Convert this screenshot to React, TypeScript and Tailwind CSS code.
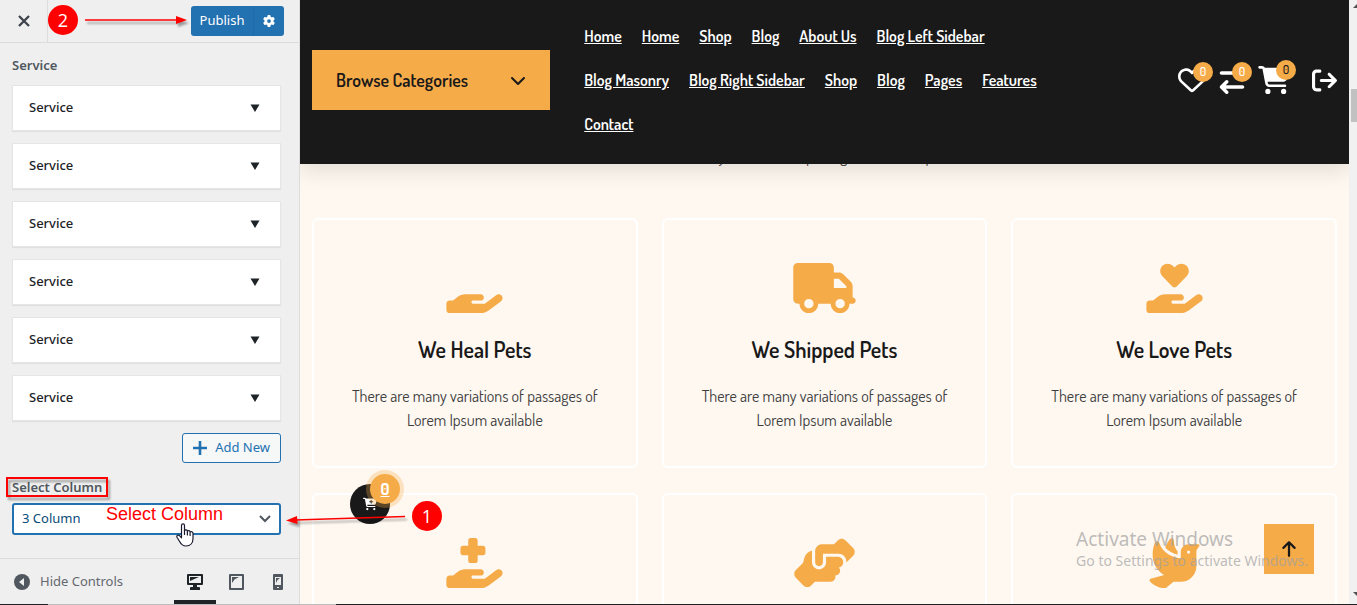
import type { ReactNode } from 'react'
import type { IconType } from 'react-icons'
import {
  FaArrowRightArrowLeft,
  FaArrowRightFromBracket,
  FaArrowUp,
  FaCartPlus,
  FaCartShopping,
  FaChevronDown,
  FaDove,
  FaGear,
  FaHandHolding,
  FaHandHoldingHeart,
  FaHandHoldingMedical,
  FaHandshakeAngle,
  FaRegHeart,
  FaTruck,
} from 'react-icons/fa6'

const navLinks = [
  'Home',
  'Home',
  'Shop',
  'Blog',
  'About Us',
  'Blog Left Sidebar',
  'Blog Masonry',
  'Blog Right Sidebar',
  'Shop',
  'Blog',
  'Pages',
  'Features',
  'Contact',
]

interface Service {
  icon: IconType
  title?: string
  text?: string
}

const blurb = 'There are many variations of passages of Lorem Ipsum available'

const services: Service[] = [
  { icon: FaHandHolding, title: 'We Heal Pets', text: blurb },
  { icon: FaTruck, title: 'We Shipped Pets', text: blurb },
  { icon: FaHandHoldingHeart, title: 'We Love Pets', text: blurb },
  { icon: FaHandHoldingMedical },
  { icon: FaHandshakeAngle },
  { icon: FaDove },
]

function DesktopIcon() {
  return (
    <svg viewBox="0 0 16 16" className="size-4" fill="currentColor" aria-hidden="true">
      <path
        fillRule="evenodd"
        d="M1 0h14a1 1 0 0 1 1 1v9a1 1 0 0 1-1 1h-5v2h2a1 1 0 0 1 1 1v2H3v-2a1 1 0 0 1 1-1h2v-2H1a1 1 0 0 1-1-1V1a1 1 0 0 1 1-1zm1 2v7h12V2z"
      />
      <path d="M3 3h9L8.500 4.500 3 7z" />
    </svg>
  )
}

function TabletIcon() {
  return (
    <svg viewBox="0 0 15 16" className="h-4 w-[15px]" fill="currentColor" aria-hidden="true">
      <path
        fillRule="evenodd"
        d="M1 0h13a1 1 0 0 1 1 1v14a1 1 0 0 1-1 1H1a1 1 0 0 1-1-1V1a1 1 0 0 1 1-1zm1 2v12h11V2z"
      />
      <path d="M3 3h7L5.500 5.500 3 9z" />
    </svg>
  )
}

function PhoneIcon() {
  return (
    <svg viewBox="0 0 10 16" className="h-4 w-2.5" fill="currentColor" aria-hidden="true">
      <path
        fillRule="evenodd"
        d="M1 0h8a1 1 0 0 1 1 1v14a1 1 0 0 1-1 1H1a1 1 0 0 1-1-1V1a1 1 0 0 1 1-1zm1 3v8h6V3zm2 10v1h2v-1z"
      />
      <path d="M3 4h4L4.500 6 3 9z" />
    </svg>
  )
}

function SidebarHeader() {
  return (
    <div className="flex h-[43px] items-center justify-between border-b border-[#dcdcde] pr-[15px]">
      <button
        type="button"
        aria-label="Close customizer"
        className="flex h-full w-12 items-center justify-center border-r border-[#dcdcde] text-[#3c434a]"
      >
        <svg viewBox="0 0 12 12" className="size-3" stroke="currentColor" strokeWidth="2.300" aria-hidden="true">
          <path d="M1 1l10 10M11 1L1 11" />
        </svg>
      </button>
      <div className="flex h-[30px] overflow-hidden rounded-[3px] bg-[#2271b1] text-[13px] text-white">
        <button type="button" className="w-[63px] border-r border-[#1f6aa7]">
          Publish
        </button>
        <button type="button" aria-label="Publish settings" className="flex w-[30px] items-center justify-center">
          <FaGear className="size-3" />
        </button>
      </div>
    </div>
  )
}

function ServiceItem() {
  return (
    <button
      type="button"
      className="flex h-[46px] items-center justify-between border border-[#e5e5e5] bg-white px-4 text-[13px] font-medium text-[#1d2327] shadow-[0_1px_1px_rgba(0,0,0,0.06)]"
    >
      Service
      <svg viewBox="0 0 10 8" className="mr-1 h-2 w-2.5" fill="currentColor" aria-hidden="true">
        <path d="M.5.500h9L5 8z" />
      </svg>
    </button>
  )
}

function SidebarFooter() {
  return (
    <div className="flex h-[46px] items-stretch border-t border-[#dcdcde] text-[#50575e]">
      <button type="button" className="flex items-center gap-2.5 pl-3.5 text-[13px] text-[#646970]">
        <svg viewBox="0 0 16 16" className="size-4" aria-hidden="true">
          <circle cx="8" cy="8" r="8" fill="#50575e" />
          <path d="M10 4v8L5 8z" fill="#eee" />
        </svg>
        Hide Controls
      </button>
      <div className="ml-auto flex">
        <button
          type="button"
          aria-label="Desktop preview"
          className="flex w-[42px] items-center justify-center border-b-4 border-[#1d2327] pt-1 text-[#1d2327]"
        >
          <DesktopIcon />
        </button>
        <button type="button" aria-label="Tablet preview" className="flex w-[41px] items-center justify-center">
          <TabletIcon />
        </button>
        <button type="button" aria-label="Mobile preview" className="flex w-[42px] items-center justify-center">
          <PhoneIcon />
        </button>
      </div>
    </div>
  )
}

function Sidebar() {
  return (
    <aside className="flex w-[300px] shrink-0 flex-col border-r border-[#dcdcde] bg-[#efefef] font-['Noto_Sans',sans-serif]">
      <SidebarHeader />
      <div className="min-h-0 flex-1 overflow-hidden pt-3 pr-[18px] pl-3">
        <h3 className="mb-2.5 text-[13px] leading-5 font-semibold text-[#50575e]">Service</h3>
        <div className="flex flex-col gap-3">
          {Array.from({ length: 6 }).map((_, i) => (
            <ServiceItem key={i} />
          ))}
        </div>
        <div className="mt-3 flex justify-end">
          <button
            type="button"
            className="flex h-[30px] items-center gap-2 rounded-[3px] border border-[#2271b1] bg-[#f6f7f7] px-2.5 text-[13px] text-[#2271b1]"
          >
            <svg viewBox="0 0 14 14" className="size-3.5" stroke="currentColor" strokeWidth="2.600" aria-hidden="true">
              <path d="M7 0v14M0 7h14" />
            </svg>
            Add New
          </button>
        </div>
        <label htmlFor="columns" className="mt-3.5 mb-1.5 block text-[13px] leading-5 font-semibold text-[#50575e]">
          Select Column
        </label>
        <div className="relative">
          <select
            id="columns"
            defaultValue="3"
            className="h-8 w-full appearance-none rounded-[3px] border-2 border-[#2271b1] bg-white px-2 text-[13px] text-[#0a4b78]"
          >
            <option value="2">2 Column</option>
            <option value="3">3 Column</option>
            <option value="4">4 Column</option>
          </select>
          <svg
            viewBox="0 0 12 8"
            className="pointer-events-none absolute top-3 right-2.5 h-2 w-3"
            fill="none"
            stroke="#50575e"
            strokeWidth="2"
            aria-hidden="true"
          >
            <path d="M1 1l5 5 5-5" />
          </svg>
        </div>
      </div>
      <SidebarFooter />
    </aside>
  )
}

interface CounterIconProps {
  label: string
  children: ReactNode
  badgeClass: string
}

function CounterIcon({ label, children, badgeClass }: CounterIconProps) {
  return (
    <a href="#" aria-label={label} className="relative flex items-center">
      {children}
      <span
        className={`absolute flex size-5 items-center justify-center rounded-full bg-[#f6ab49] text-xs font-medium ${badgeClass}`}
      >
        0
      </span>
    </a>
  )
}

function SiteHeader() {
  return (
    <header className="relative z-10 grid shrink-0 grid-cols-12 items-center bg-[#191919] pt-3.5 pb-[18px] shadow-[0_8px_20px_rgba(0,0,0,0.1)]">
      <div className="col-span-3 px-3">
        <button
          type="button"
          className="flex h-[60px] w-full items-center justify-between bg-[#f6ab49] px-6 text-lg font-semibold text-[#191919]"
        >
          Browse Categories
          <FaChevronDown className="size-4" />
        </button>
      </div>
      <nav className="col-span-6 flex flex-wrap px-3">
        {navLinks.map((link, i) => (
          <a
            key={i}
            href="#"
            className="mx-2.5 text-base leading-[44px] font-semibold whitespace-nowrap text-white underline"
          >
            {link}
          </a>
        ))}
      </nav>
      <div className="col-span-3 flex items-center justify-end gap-3 pr-3 text-white">
        <CounterIcon label="Wishlist" badgeClass="-top-1 left-[15px]">
          <FaRegHeart className="size-7" />
        </CounterIcon>
        <CounterIcon label="Compare" badgeClass="-top-1 left-3.5">
          <FaArrowRightArrowLeft className="size-7" />
        </CounterIcon>
        <CounterIcon label="Cart" badgeClass="-top-1.5 left-[18px] text-[#191919]">
          <FaCartShopping className="h-7 w-8" />
        </CounterIcon>
        <a href="#" aria-label="Log out" className="ml-2.5">
          <FaArrowRightFromBracket className="size-[25px]" />
        </a>
      </div>
    </header>
  )
}

function ServiceCard({ icon: Icon, title, text }: Service) {
  return (
    <article className="flex flex-col items-center rounded-md border-2 border-white px-8 pt-[43px] pb-[34px] text-center">
      <Icon className="h-[50px] w-[63px] text-[#f6ab49]" />
      {title && <h4 className="mt-[22px] text-[22px] leading-7 font-semibold text-[#191919]">{title}</h4>}
      {text && <p className="mt-[21px] text-base text-[#3d3d3d]">{text}</p>}
    </article>
  )
}

function Preview() {
  return (
    <main className="flex min-w-0 flex-1 flex-col overflow-hidden bg-[#fef8f1] font-[Dosis,'Liberation_Sans_Narrow',sans-serif]">
      <SiteHeader />
      <section className="px-3">
        <p className="-mt-5 mb-[50px] text-center text-base text-[#3d3d3d]">{blurb}.</p>
        <div className="grid auto-rows-fr grid-cols-3 gap-x-6 gap-y-[25px]">
          {services.map((service, i) => (
            <ServiceCard key={i} {...service} />
          ))}
        </div>
      </section>
    </main>
  )
}

function Scrollbar() {
  return (
    <div className="relative w-2 shrink-0 overflow-hidden bg-[#f1f1f1]">
      <div className="absolute top-[89px] left-0.5 h-[33px] w-3 bg-[#c1c1c1]" />
      <svg viewBox="0 0 8 4" className="absolute top-1 left-1 h-1 w-2" fill="#505050" aria-hidden="true">
        <path d="M0 4h8L4 0z" />
      </svg>
      <svg viewBox="0 0 8 4" className="absolute bottom-2 left-1 h-1 w-2" fill="#505050" aria-hidden="true">
        <path d="M0 0h8L4 4z" />
      </svg>
    </div>
  )
}

function FloatingActions() {
  return (
    <>
      <a
        href="#"
        aria-label="Open cart"
        className="absolute top-[484px] left-[350px] z-20 flex size-10 items-center justify-center rounded-full bg-[#191919] font-[Dosis,'Liberation_Sans_Narrow',sans-serif] text-white"
      >
        <FaCartPlus className="size-3.5" />
        <span className="absolute -top-2.5 left-5 flex size-[30px] items-center justify-center rounded-full bg-[#f6ab49] text-base font-bold underline ring-4 ring-[#f6ab49]/30">
          0
        </span>
      </a>
      <button
        type="button"
        aria-label="Back to top"
        className="absolute right-[43px] bottom-[31px] z-20 flex size-[50px] items-center justify-center bg-[#f6ab49] text-[#191919]"
      >
        <FaArrowUp className="size-[18px]" />
      </button>
    </>
  )
}

function Watermark() {
  return (
    <div className="pointer-events-none absolute right-[49px] bottom-[34px] z-30 font-['Noto_Sans',sans-serif] text-[#a0a0a0]/70">
      <p className="text-[19px] leading-6">Activate Windows</p>
      <p className="text-sm leading-5">Go to Settings to activate Windows.</p>
    </div>
  )
}

function StepBadge({ className, children }: { className: string; children: ReactNode }) {
  return (
    <span
      className={`absolute flex size-[30px] items-center justify-center rounded-full bg-[#ff0000] font-['Open_Sans',sans-serif] text-lg text-white ${className}`}
    >
      {children}
    </span>
  )
}

function Annotations() {
  return (
    <div className="pointer-events-none absolute inset-0 z-40">
      <StepBadge className="top-[5px] left-12">2</StepBadge>
      <svg
        viewBox="0 0 106 12"
        className="absolute top-3.5 left-[83px] h-3 w-[106px] overflow-visible drop-shadow-[2px_3px_1px_rgba(0,0,0,0.35)]"
        aria-hidden="true"
      >
        <path d="M2 6h92" stroke="#f00" strokeWidth="1.300" />
        <path d="M93 2l11 4-11 4z" fill="#f00" />
      </svg>
      <StepBadge className="top-[501px] left-[412px]">1</StepBadge>
      <svg
        viewBox="0 0 122 12"
        className="absolute top-[513px] left-[285px] h-3 w-[122px] overflow-visible drop-shadow-[2px_3px_1px_rgba(0,0,0,0.35)]"
        aria-hidden="true"
      >
        <path d="M10 7L120 3.500" stroke="#f00" strokeWidth="1.300" />
        <path d="M12 3l-11 4.500 11.500 3.500z" fill="#f00" />
      </svg>
      <div className="absolute top-[477px] left-1.5 h-5 w-[102px] border-2 border-[#ff0000] drop-shadow-[2px_3px_1px_rgba(0,0,0,0.35)]" />
      <span className="absolute top-[502px] left-[106px] font-['Liberation_Sans',sans-serif] text-lg leading-6 text-[#ff0000]">
        Select Column
      </span>
      <svg viewBox="0 0 18 24" className="absolute top-[523px] left-44 h-6 w-[18px]" aria-hidden="true">
        <path
          d="M5.500 2.500c0-2.200 3-2.200 3 0v5.200c.8-1.400 2.800-.9 2.900.5.800-1 2.600-.6 2.700.8.900-.8 2.900-.4 2.900 1.300v5.200c0 4.500-2.600 7.500-7 7.500-3.600 0-5-1.800-6.400-4.500L1 14.300c-.8-1.900 1.300-3 2.700-1.500l1.800 2z"
          fill="#fff"
          stroke="#1a1a2e"
          strokeWidth="1.200"
          strokeLinejoin="round"
        />
        <path d="M8.500 7.500v4M11.400 8.500v3.500M14.100 9.500v3" stroke="#1a1a2e" strokeWidth="1.200" strokeLinecap="round" />
      </svg>
    </div>
  )
}

export default function App() {
  return (
    <div className="relative flex h-screen flex-col overflow-hidden">
      <div className="flex min-h-0 flex-1">
        <Sidebar />
        <Preview />
        <Scrollbar />
      </div>
      <div className="flex h-px shrink-0 bg-[#1f2024]">
        <div className="ml-12 w-72 bg-[#bdbdbd]" />
      </div>
      <FloatingActions />
      <Watermark />
      <Annotations />
    </div>
  )
}
